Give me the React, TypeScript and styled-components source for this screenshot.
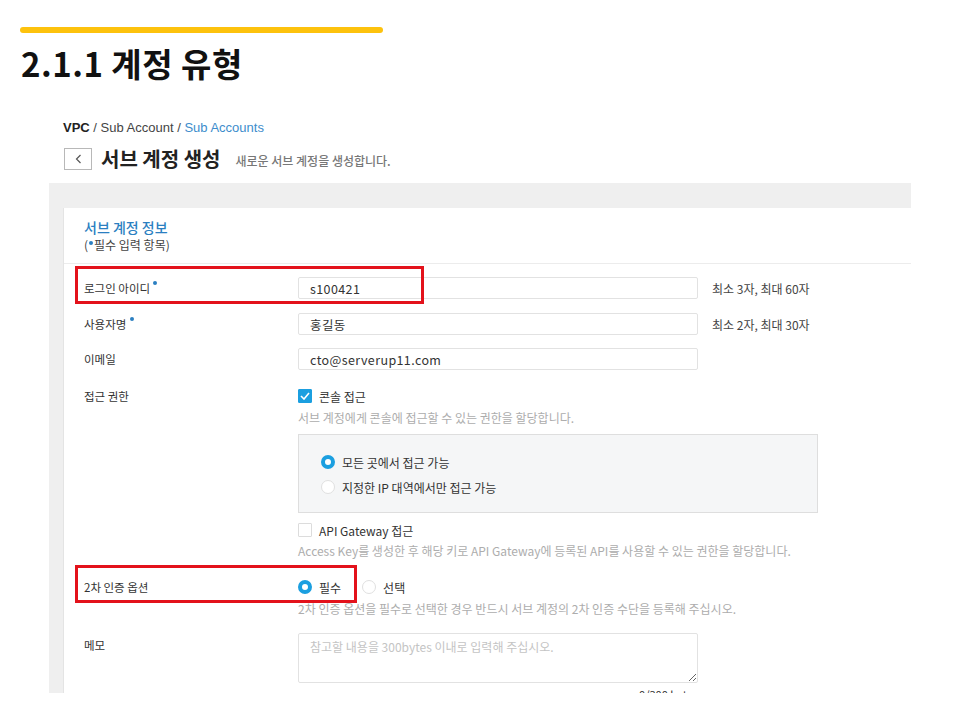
import React from "react";
import styled, { createGlobalStyle } from "styled-components";

const GlobalStyle = createGlobalStyle`
  html, body {
    margin: 0;
    padding: 0;
    background: #ffffff;
  }
  body {
    font-family: "Noto Sans CJK KR", "Noto Sans", Roboto, sans-serif;
    color: #333;
  }
`;

const Slide = styled.div`
  width: 960px;
  height: 720px;
  overflow: hidden;
  padding-top: 27px;
  box-sizing: border-box;
`;

const YellowBar = styled.div`
  margin-left: 20px;
  width: 363px;
  height: 6px;
  border-radius: 3px;
  background: #fdc20d;
`;

const SlideTitle = styled.h1`
  margin: 10px 0 0 21px;
  font-family: "Noto Sans CJK KR", sans-serif;
  font-size: 33px;
  line-height: 40px;
  font-weight: 700;
  color: #111;
  letter-spacing: 0.5px;
`;

const Frame = styled.div`
  margin: 30px 0 0 49px;
  width: 862px;
  height: 580px;
  overflow: hidden;
  padding-top: 8px;
  box-sizing: border-box;
  display: flex;
  flex-direction: column;
`;

const Breadcrumb = styled.div`
  padding-left: 14px;
  font-family: "Liberation Sans", Arial, sans-serif;
  font-size: 13px;
  line-height: 14px;
  color: #444;
  b {
    color: #222;
    font-weight: 700;
  }
  span {
    color: #3d8dcc;
  }
`;

const HeaderRow = styled.div`
  display: flex;
  align-items: center;
  margin: 13px 0 13px 15px;
  height: 22px;
`;

const BackButton = styled.div`
  width: 26px;
  height: 20px;
  border: 1px solid #b8b8b8;
  display: flex;
  align-items: center;
  justify-content: center;
  margin-right: 9px;
`;

const PageTitle = styled.div`
  font-size: 20px;
  font-weight: 700;
  color: #222;
  margin-right: 15px;
  line-height: 22px;
`;

const PageSub = styled.div`
  font-size: 12px;
  font-weight: 500;
  color: #777;
  margin-top: 3px;
`;

const GrayArea = styled.div`
  flex: 1;
  background: #efefef;
  padding: 25px 0 0 14px;
  display: flex;
  flex-direction: column;
`;

const Card = styled.div`
  flex: 1;
  background: #fff;
  border-left: 1px solid #e4e4e4;
`;

const CardHead = styled.div`
  padding: 11px 0 10px 20px;
  border-bottom: 1px solid #ececec;
`;

const CardTitle = styled.div`
  font-size: 14px;
  line-height: 17px;
  font-weight: 500;
  color: #2b7fc1;
`;

const CardNote = styled.div`
  display: flex;
  align-items: flex-start;
  margin-top: 1px;
  font-size: 12px;
  line-height: 16px;
  color: #444;
`;

const Dot = styled.span<{ $gap?: number }>`
  display: inline-block;
  flex: none;
  width: 4px;
  height: 4px;
  border-radius: 50%;
  background: #2b7fc1;
  vertical-align: top;
  margin: ${(p) => `4px 1px 0 ${p.$gap ?? 0}px`};
`;

const Form = styled.div`
  padding: 13px 0 0 20px;
  display: flex;
  flex-direction: column;
`;

const Row = styled.div<{ $mt?: number }>`
  position: relative;
  display: grid;
  grid-template-columns: 214px 1fr;
  align-items: start;
  margin-top: ${(p) => p.$mt ?? 0}px;
`;

const Label = styled.div<{ $h?: number; $pt?: number }>`
  font-size: 11.5px;
  color: #333;
  line-height: ${(p) => p.$h ?? 22}px;
  padding-top: ${(p) => p.$pt ?? 0}px;
`;

const Field = styled.div`
  display: flex;
  flex-direction: column;
`;

const InputLine = styled.div`
  display: flex;
  align-items: center;
`;

const TextInput = styled.input`
  width: 400px;
  height: 22px;
  box-sizing: border-box;
  border: 1px solid #e2e2e2;
  border-radius: 2px;
  padding: 0 11px;
  font-family: "Noto Sans CJK KR", Roboto, sans-serif;
  font-size: 12.5px;
  letter-spacing: 0.4px;
  color: #333;
  outline: none;
  background: #fff;
`;

const Hint = styled.div`
  margin-left: 14px;
  font-size: 12px;
  color: #444;
`;

const Help = styled.div<{ $mt?: number }>`
  margin-top: ${(p) => p.$mt ?? 7}px;
  font-size: 12px;
  line-height: 14px;
  color: #adadad;
  white-space: nowrap;
`;

const Option = styled.div<{ $mt?: number }>`
  display: flex;
  align-items: center;
  height: 16px;
  margin-top: ${(p) => p.$mt ?? 0}px;
  font-size: 12px;
  color: #333;
  gap: 7px;
`;

const OptionGroup = styled.div`
  display: flex;
  gap: 21px;
`;

const CheckBox = styled.div<{ $on?: boolean }>`
  width: 14px;
  height: 14px;
  box-sizing: border-box;
  border-radius: 1px;
  border: 1px solid ${(p) => (p.$on ? "#1b9fe0" : "#dcdcdc")};
  background: ${(p) => (p.$on ? "#1b9fe0" : "#fff")};
  display: flex;
  align-items: center;
  justify-content: center;
`;

const Radio = styled.div<{ $on?: boolean }>`
  width: 14px;
  height: 14px;
  box-sizing: border-box;
  border-radius: 50%;
  border: ${(p) => (p.$on ? "4px solid #1b9fe0" : "1px solid #e0e0e0")};
  background: #fff;
`;

const OptionBox = styled.div`
  margin-top: 9px;
  width: 520px;
  height: 79px;
  box-sizing: border-box;
  border: 1px solid #dedede;
  background: #f5f6f7;
  padding: 19px 0 0 22px;
  display: flex;
  flex-direction: column;
  gap: 9px;
`;

const Memo = styled.textarea`
  width: 400px;
  height: 50px;
  box-sizing: border-box;
  border: 1px solid #e2e2e2;
  border-radius: 2px;
  padding: 4px 11px;
  font-family: "Noto Sans CJK KR", Roboto, sans-serif;
  font-size: 12px;
  resize: vertical;
  outline: none;
  &::placeholder {
    color: #c4c4c4;
  }
`;

const Counter = styled.div`
  width: 400px;
  text-align: right;
  font-size: 11px;
  color: #333;
  margin-top: 3px;
`;

const Highlight = styled.div<{ $w: number; $top: number }>`
  position: absolute;
  left: -9px;
  top: ${(p) => p.$top}px;
  width: ${(p) => p.$w}px;
  height: 38px;
  box-sizing: border-box;
  border: 3px solid #e3121b;
  pointer-events: none;
`;

const Check = () => (
  <svg width="10" height="8" viewBox="0 0 10 8">
    <path d="M1 4 L4 7 L9 1" fill="none" stroke="#fff" strokeWidth="1.6" />
  </svg>
);

const Chevron = () => (
  <svg width="7" height="10" viewBox="0 0 7 10">
    <path d="M5.5 1 L1.5 5 L5.5 9" fill="none" stroke="#555" strokeWidth="1.2" />
  </svg>
);

export default function App() {
  return (
    <>
      <GlobalStyle />
      <Slide>
        <YellowBar />
        <SlideTitle>2.1.1 계정 유형</SlideTitle>
        <Frame>
          <Breadcrumb>
            <b>VPC</b> / Sub Account / <span>Sub Accounts</span>
          </Breadcrumb>
          <HeaderRow>
            <BackButton>
              <Chevron />
            </BackButton>
            <PageTitle>서브 계정 생성</PageTitle>
            <PageSub>새로운 서브 계정을 생성합니다.</PageSub>
          </HeaderRow>
          <GrayArea>
            <Card>
              <CardHead>
                <CardTitle>서브 계정 정보</CardTitle>
                <CardNote>
                  (<Dot $gap={1} />필수 입력 항목)
                </CardNote>
              </CardHead>
              <Form>
                <Row>
                  <Label>
                    로그인 아이디<Dot $gap={3} />
                  </Label>
                  <InputLine>
                    <TextInput readOnly value="s100421" />
                    <Hint>최소 3자, 최대 60자</Hint>
                  </InputLine>
                  <Highlight $w={349} $top={-11} />
                </Row>
                <Row $mt={14}>
                  <Label>
                    사용자명<Dot $gap={4} />
                  </Label>
                  <InputLine>
                    <TextInput readOnly value="홍길동" />
                    <Hint>최소 2자, 최대 30자</Hint>
                  </InputLine>
                </Row>
                <Row $mt={13}>
                  <Label>이메일</Label>
                  <InputLine>
                    <TextInput readOnly value="cto@serverup11.com" />
                  </InputLine>
                </Row>
                <Row $mt={18}>
                  <Label $h={16}>접근 권한</Label>
                  <Field>
                    <Option>
                      <CheckBox $on>
                        <Check />
                      </CheckBox>
                      콘솔 접근
                    </Option>
                    <Help>서브 계정에게 콘솔에 접근할 수 있는 권한을 할당합니다.</Help>
                    <OptionBox>
                      <Option>
                        <Radio $on />
                        모든 곳에서 접근 가능
                      </Option>
                      <Option>
                        <Radio />
                        지정한 IP 대역에서만 접근 가능
                      </Option>
                    </OptionBox>
                    <Option $mt={9}>
                      <CheckBox />
                      API Gateway 접근
                    </Option>
                    <Help $mt={6}>
                      Access Key를 생성한 후 해당 키로 API Gateway에 등록된 API를 사용할 수 있는 권한을 할당합니다.
                    </Help>
                  </Field>
                </Row>
                <Row $mt={21}>
                  <Label $h={16}>2차 인증 옵션</Label>
                  <Field>
                    <OptionGroup>
                      <Option>
                        <Radio $on />
                        필수
                      </Option>
                      <Option>
                        <Radio />
                        선택
                      </Option>
                    </OptionGroup>
                    <Help>
                      2차 인증 옵션을 필수로 선택한 경우 반드시 서브 계정의 2차 인증 수단을 등록해 주십시오.
                    </Help>
                  </Field>
                  <Highlight $w={282} $top={-14} />
                </Row>
                <Row $mt={17}>
                  <Label $h={16} $pt={4}>
                    메모
                  </Label>
                  <Field>
                    <Memo readOnly placeholder="참고할 내용을 300bytes 이내로 입력해 주십시오." />
                    <Counter>0/300 bytes</Counter>
                  </Field>
                </Row>
              </Form>
            </Card>
          </GrayArea>
        </Frame>
      </Slide>
    </>
  );
}
